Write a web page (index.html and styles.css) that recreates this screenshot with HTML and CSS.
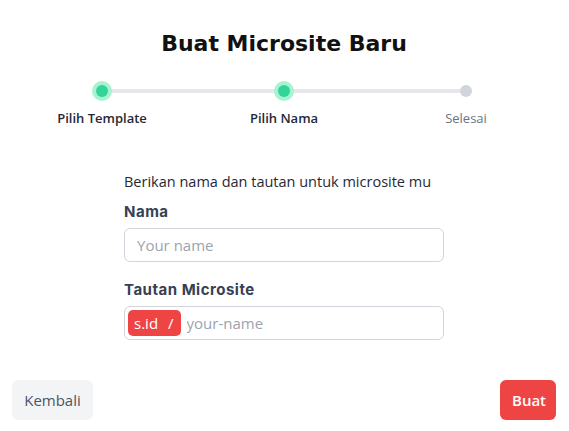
FILE: index.html
```html
<!DOCTYPE html>
<html>
<head>
<meta charset="utf-8">
<link rel="stylesheet" href="styles.css">
</head>
<body>
<div class="page">
  <h1 class="title">Buat Microsite Baru</h1>
  <div class="stepper">
    <div class="track"></div>
    <div class="step done">
      <div class="dot-wrap"><span class="dot"></span></div>
      <div class="step-label">Pilih Template</div>
    </div>
    <div class="step done">
      <div class="dot-wrap"><span class="dot"></span></div>
      <div class="step-label">Pilih Nama</div>
    </div>
    <div class="step">
      <div class="dot-wrap"><span class="dot"></span></div>
      <div class="step-label">Selesai</div>
    </div>
  </div>
  <form class="form">
    <p class="intro">Berikan nama dan tautan untuk microsite mu</p>
    <label class="label">Nama</label>
    <div class="field"><input class="input" placeholder="Your name"></div>
    <label class="label second">Tautan Microsite</label>
    <div class="field link-field">
      <span class="prefix">s.id<span class="slash">/</span></span>
      <input class="input bare" placeholder="your-name">
    </div>
  </form>
  <div class="actions">
    <button class="btn back">Kembali</button>
    <button class="btn primary">Buat</button>
  </div>
</div>
</body>
</html>
```

FILE: styles.css
```css
* { box-sizing: border-box; }
html, body { margin: 0; padding: 0; background: #fff; }
body { font-family: "Open Sans", "Noto Sans", sans-serif; color: #111827; }
.page { width: 569px; height: 431px; display: flex; flex-direction: column; padding: 0 13px 0 12px; }
.title {
  margin: 29px 0 0; text-align: center;
  font-family: "DejaVu Sans", Inter, sans-serif; font-weight: 700; font-size: 22px;
  line-height: 30px; color: #111;
}
.stepper { position: relative; display: grid; grid-template-columns: repeat(3, 1fr); margin: 22px -1px 0; }
.track { position: absolute; left: 91px; right: 91px; top: 8px; height: 4px; background: #e5e7eb; border-radius: 2px; }
.step { display: flex; flex-direction: column; align-items: center; position: relative; }
.dot-wrap { width: 20px; height: 20px; display: flex; align-items: center; justify-content: center; }
.dot { width: 12px; height: 12px; border-radius: 50%; background: #d1d5db; }
.step.done .dot-wrap { background: #a7f3d0; border-radius: 50%; }
.step.done .dot { background: #34d399; }
.step-label { margin-top: 8px; font-size: 13px; line-height: 18px; color: #6b7280; }
.step.done .step-label { color: #1f2937; font-weight: 600; }
.form { width: 320px; margin: 45px auto 0; display: flex; flex-direction: column; }
.intro { margin: 0; font-size: 14.5px; line-height: 20px; color: #1f2937; }
.label { margin-top: 10px; font-family: Inter, sans-serif; font-weight: 700; font-size: 15px; line-height: 20px; color: #374151; letter-spacing: 0.5px; }
.label.second { margin-top: 18px; }
.field { margin-top: 6px; height: 34px; border: 1px solid #d1d5db; border-radius: 6px; display: flex; align-items: center; padding: 0 3px; }
.input { border: 0; outline: 0; flex: 1; height: 100%; padding: 0 9px; font: inherit; font-size: 15px; color: #111; background: transparent; }
.input::placeholder { color: #9ca3af; }
.input.bare { padding-left: 6px; }
.prefix { background: #ef4444; color: #fff; font-size: 15px; line-height: 26px; height: 26px; padding: 0 7px 0 6px; border-radius: 5px; white-space: nowrap; }
.slash { margin-left: 10px; }
.actions { margin-top: auto; margin-bottom: 11px; display: flex; justify-content: space-between; }
.btn { border: 0; border-radius: 6px; height: 40px; font-family: "Open Sans", sans-serif; font-size: 15px; padding: 0 12px; }
.btn.back { background: #f3f4f6; color: #4b5563; width: 81px; }
.btn.primary { background: #ef4444; color: #fff; font-weight: 600; width: 56px; }
```
